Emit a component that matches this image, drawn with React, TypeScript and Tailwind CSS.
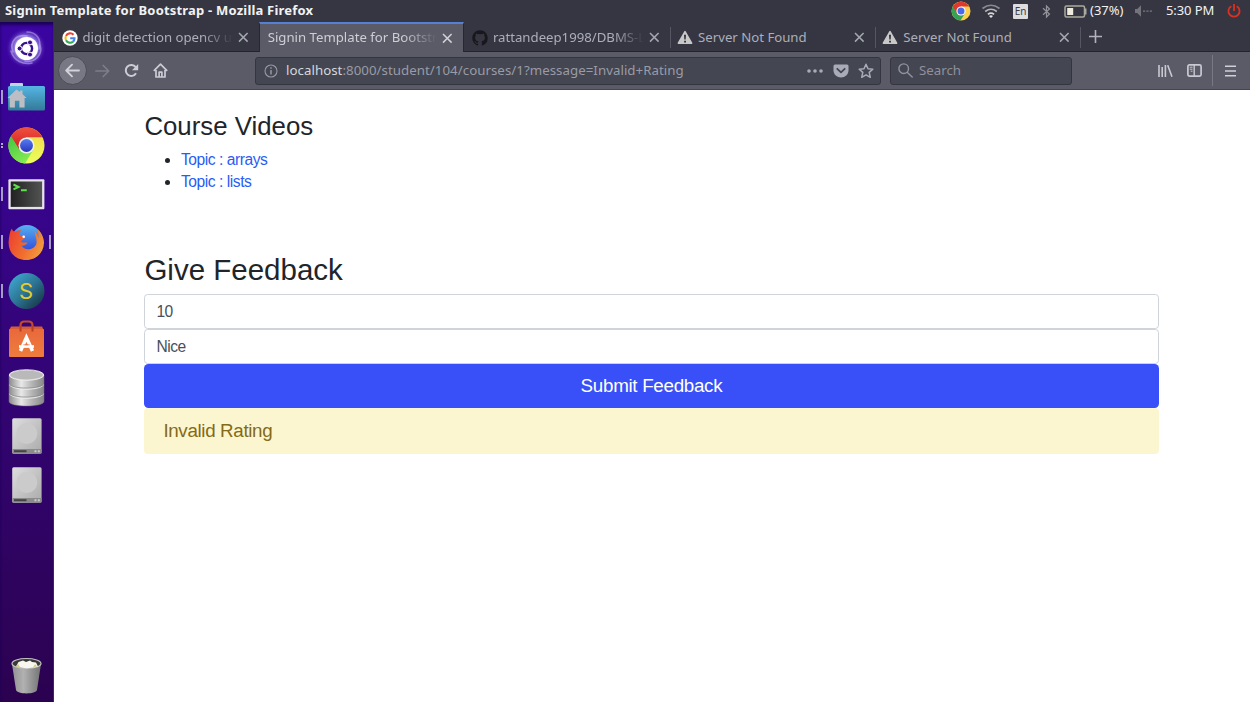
import React from "react";

const CloseIcon = ({ bright }: { bright?: boolean }) => (
  <svg className="h-[11px] w-[11px] shrink-0" viewBox="0 0 11 11" fill="none" stroke={bright ? "#d0d1d8" : "#a5a7b0"} strokeWidth="1.5">
    <path d="M1 1 L9.6 9.6 M9.6 1 L1 9.6" />
  </svg>
);

const GoogleIcon = () => (
  <svg className="h-[16px] w-[16px] shrink-0" viewBox="0 0 16 16">
    <circle cx="8" cy="8" r="7.7" fill="#fff" />
    <g fill="none" strokeWidth="2.1">
      <path d="M11.5 4.8 A4.6 4.6 0 0 0 4 5.9" stroke="#ea4335" />
      <path d="M4 5.9 A4.6 4.6 0 0 0 4 10.3" stroke="#fbbc05" />
      <path d="M4 10.3 A4.6 4.6 0 0 0 11 11.6" stroke="#34a853" />
      <path d="M11 11.6 A4.6 4.6 0 0 0 12.5 8.2 H8.2" stroke="#4285f4" />
    </g>
  </svg>
);

const GithubIcon = () => (
  <svg className="h-[16px] w-[16px] shrink-0" viewBox="0 0 16 16" fill="#17171c">
    <path d="M8 0.3C3.7.3.3 3.8.3 8.1c0 3.4 2.2 6.3 5.3 7.4.4.1.5-.2.5-.4v-1.4c-2.1.5-2.6-1-2.6-1-.4-.9-.9-1.1-.9-1.1-.7-.5.1-.5.1-.5.8.1 1.2.8 1.2.8.7 1.2 1.8.9 2.2.7.1-.5.3-.9.5-1.1-1.7-.2-3.5-.9-3.5-3.9 0-.8.3-1.5.8-2.1-.1-.2-.3-1 .1-2.1 0 0 .6-.2 2.1.8a7 7 0 0 1 3.8 0c1.5-1 2.1-.8 2.1-.8.4 1.1.2 1.9.1 2.1.5.6.8 1.2.8 2.1 0 3-1.8 3.6-3.5 3.8.3.3.5.8.5 1.5v2.1c0 .2.1.5.5.4a7.8 7.8 0 0 0 5.3-7.4C15.7 3.8 12.3.3 8 .3z" />
  </svg>
);

const WarnIcon = () => (
  <svg className="h-[15px] w-[16px] shrink-0" viewBox="0 0 16 15">
    <path d="M8 1.6 L14.6 13.2 H1.4 Z" fill="#c8c8c9" stroke="#c8c8c9" strokeWidth="1.6" strokeLinejoin="round" />
    <path d="M7 4.8h2l-.3 4.8H7.3z M7.1 10.8h1.9v1.8H7.1z" fill="#33343f" />
  </svg>
);

const ChromeSmall = () => (
  <svg className="h-[20px] w-[20px] shrink-0" viewBox="0 0 20 20">
    <circle cx="10" cy="10" r="9.5" fill="#ffd04a" />
    <path d="M10 10 L1.8 5.3 A9.5 9.5 0 0 0 9.5 19.5 L14 12.3Z" fill="#35a352" />
    <path d="M1.8 5.3 A9.5 9.5 0 0 1 18.2 5.5 H10 L5.9 12Z" fill="#dc3a30" />
    <circle cx="10" cy="10" r="4.6" fill="#fff" />
    <circle cx="10" cy="10" r="3.5" fill="#4a68ec" />
  </svg>
);

const ICON = "h-[42px] w-[42px]";

const UbuntuDash = () => (
  <svg className={ICON} viewBox="0 0 42 42">
    <defs>
      <radialGradient id="dash">
        <stop offset="0.5" stopColor="#b5a5f4" />
        <stop offset="0.75" stopColor="#7657d5" stopOpacity="0.6" />
        <stop offset="1" stopColor="#4710ad" stopOpacity="0" />
      </radialGradient>
    </defs>
    <circle cx="21" cy="21" r="20" fill="url(#dash)" />
    <g fill="none" stroke="#d8cef9" strokeLinecap="round" opacity=".45">
      <path d="M8 25C4 14 12 7 22 9" strokeWidth="1.6" />
      <path d="M22 5C31 5 37 12 34 22" strokeWidth="1.6" />
      <path d="M35 18C38 28 30 36 20 34" strokeWidth="1.6" />
      <path d="M6 24C9 34 18 38 27 36" strokeWidth="1.6" />
    </g>
    <circle cx="21.5" cy="21.5" r="11.5" fill="#fff" />
    <circle cx="21.5" cy="21.5" r="5.6" fill="none" stroke="#39108c" strokeWidth="2.4" />
    <g fill="#39108c" stroke="#fff" strokeWidth="1">
      <circle cx="14.6" cy="21.5" r="2.5" />
      <circle cx="25" cy="15.4" r="2.5" />
      <circle cx="25" cy="27.6" r="2.5" />
    </g>
  </svg>
);

const FilesIcon = () => (
  <svg className={ICON} viewBox="0 0 42 42">
    <defs>
      <linearGradient id="folder" x2="0" y2="1">
        <stop stopColor="#56b5e4" />
        <stop offset="1" stopColor="#327a99" />
      </linearGradient>
    </defs>
    <path d="M5 12V8q0-1 1-1h11q1 0 1 1v4z" fill="#c3d3dd" />
    <rect x="3" y="10" width="37" height="24.5" rx="1.5" fill="url(#folder)" />
    <path d="M11.5 13.5 L2.5 22 h2.2 V31.5 h5.2 v-6.8 h4.5 v6.8 h5.2 V22 h2 L17.5 18 v-3.5h-2.4v1.6z" fill="#bdbec3" />
  </svg>
);

const ChromeBig = () => (
  <svg className={ICON} viewBox="0 0 42 42">
    <defs>
      <linearGradient id="cr" x2="0" y2="1"><stop stopColor="#ef5040" /><stop offset="1" stopColor="#d41f22" /></linearGradient>
      <linearGradient id="cb" x2="0" y2="1"><stop stopColor="#557cf5" /><stop offset="1" stopColor="#2a37ba" /></linearGradient>
      <linearGradient id="cg" x2=".6" y2="1"><stop stopColor="#3fc53f" /><stop offset="1" stopColor="#86ea55" /></linearGradient>
      <linearGradient id="cy" x2="0" y2="1"><stop stopColor="#f7d548" /><stop offset="1" stopColor="#e9ff5c" /></linearGradient>
    </defs>
    <circle cx="21.5" cy="21.5" r="18" fill="url(#cy)" />
    <path d="M21.5 21.5 L6 12 A18 18 0 0 0 20 39.4 L28.5 25.5Z" fill="url(#cg)" />
    <path d="M6 12 A18 18 0 0 1 37.4 13.3 H21.5 L14 25Z" fill="url(#cr)" />
    <circle cx="21.5" cy="21.5" r="8" fill="#f0f1f2" />
    <circle cx="21.5" cy="21.5" r="6.5" fill="url(#cb)" />
  </svg>
);

const TerminalIcon = () => (
  <svg className={ICON} viewBox="0 0 42 42">
    <defs>
      <linearGradient id="term" x2="1" y2="0"><stop stopColor="#202120" /><stop offset="1" stopColor="#525353" /></linearGradient>
    </defs>
    <rect x="3.4" y="6.2" width="36" height="30" rx="1" fill="#e6e2eb" />
    <rect x="5.7" y="8.5" width="31.4" height="25.4" fill="url(#term)" />
    <path d="M8.5 11.5 L13.5 14 L8.5 16.3 M16 17.3h5.8" stroke="#5ee04b" strokeWidth="2" fill="none" />
  </svg>
);

const FirefoxBig = () => (
  <svg className={ICON} viewBox="0 0 42 42">
    <defs>
      <linearGradient id="ffx" x1="0" x2="1" y1=".3" y2=".7"><stop stopColor="#ed432f" /><stop offset=".55" stopColor="#f0702f" /><stop offset="1" stopColor="#f0a043" /></linearGradient>
      <linearGradient id="ffb" x2="0" y2="1"><stop stopColor="#57b1f0" /><stop offset="1" stopColor="#2734d9" /></linearGradient>
    </defs>
    <circle cx="22" cy="20" r="16" fill="url(#ffb)" />
    <path d="M6.8 7.5 C7.6 10 8.8 10.9 10.5 10.7 C12 9.5 14 9 16.5 9.2 C14.8 10.5 14.5 12.2 14.8 14 C17 14 20 14.3 20.3 16 C20 17.8 17 18.5 16 20.5 C18 22.5 20.2 20.8 22.5 21.7 C21 24.2 18.5 24.8 16.5 24.6 C19 30 29 29.5 31.3 23 C32.6 18 29.5 14 29.5 9.5 C31 12.1 33 14 33.5 17 C34 15 32.5 11 33 8.5 C36.5 12 39.2 17 39 22 C38.5 32 31 39 21.2 39 C10 39 3.3 31 3.6 21 C4 15.5 4.8 10.5 6.8 7.5Z" fill="url(#ffx)" />
    <circle cx="18.7" cy="15.7" r="1.3" fill="#fff" />
  </svg>
);

const SIcon = () => (
  <div className="flex h-[36px] w-[36px] translate-x-[0.5px] items-center justify-center rounded-full bg-linear-to-br from-[#45b1db] via-[#2c7595] to-[#132b38] font-['Inter',sans-serif] text-[22px] leading-none text-[#e6ca31]">
    S
  </div>
);

const SoftwareIcon = () => (
  <svg className={ICON} viewBox="0 0 42 42">
    <defs>
      <linearGradient id="bag" x2="0" y2="1"><stop stopColor="#e9693c" /><stop offset="1" stopColor="#ee7d3d" /></linearGradient>
    </defs>
    <path d="M15.5 12V7.5q0-4 4-4h4q4 0 4 4V12" fill="none" stroke="#c44b29" strokeWidth="2.2" />
    <path d="M6 8.5h31l2 4H4z" fill="#d55c35" />
    <rect x="4" y="11" width="35" height="28" rx="1" fill="url(#bag)" />
    <path d="M15.5 13.5V8M27.5 13.5V8" stroke="#b64020" strokeWidth="2" />
    <g fill="none" stroke="#fff" strokeWidth="3.5">
      <path d="M15.5 33 L21.4 19.5 L27.5 33" />
      <path d="M14 28.5h15" strokeWidth="2.7" />
    </g>
    <path d="M18.3 26.8h6.4" stroke="#ec7841" strokeWidth=".8" />
  </svg>
);

const DatabaseIcon = () => (
  <svg className={ICON} viewBox="0 0 42 42">
    <defs>
      <linearGradient id="db" x2="1" y2="0"><stop stopColor="#8b8b8b" /><stop offset=".35" stopColor="#e8e8e8" /><stop offset=".65" stopColor="#b5b5b5" /><stop offset="1" stopColor="#888" /></linearGradient>
    </defs>
    {[26, 17, 8].map((y) => (
      <g key={y} transform={`translate(0 ${y})`}>
        <path d="M4 0v8.5c0 6 35 6 35 0V0z" fill="url(#db)" stroke="#6f6f6f" strokeWidth=".5" />
        <ellipse cx="21.5" cy="0" rx="17.3" ry="5.3" fill="#cfcfcf" stroke="#f4f4f4" strokeWidth=".8" />
      </g>
    ))}
    <ellipse cx="21.5" cy="8" rx="16" ry="4.3" fill="#b9b9b9" />
  </svg>
);

const DiskIcon = () => (
  <svg className={ICON} viewBox="0 0 42 42">
    <defs>
      <linearGradient id="disk" x2="1" y2="1"><stop stopColor="#dedede" /><stop offset="1" stopColor="#aaaaaa" /></linearGradient>
    </defs>
    <rect x="7.2" y="3.3" width="29.4" height="35.5" rx="1.5" fill="url(#disk)" />
    <circle cx="21.8" cy="18.5" r="10.5" fill="#cbcbcb" />
    <rect x="7.5" y="34" width="29" height="4.2" fill="#8b8b8b" />
    <path d="M9 36.2h12.5" stroke="#444" strokeWidth="2" />
    <path d="M29.5 36.2h2m1.3 0h2" stroke="#ccc" strokeWidth="2" />
  </svg>
);

const TrashIcon = () => (
  <svg className={ICON} viewBox="0 0 42 42">
    <defs>
      <linearGradient id="bin" x2="1" y2="0"><stop stopColor="#929292" /><stop offset=".4" stopColor="#b1b1b1" /><stop offset="1" stopColor="#737373" /></linearGradient>
    </defs>
    <path d="M7 9 L11 35 C12 39.5 31 39.5 32 35 L36 9Z" fill="url(#bin)" />
    <ellipse cx="21.5" cy="8.5" rx="14.5" ry="5" fill="#393937" stroke="#c4c4c3" strokeWidth="1.2" />
    <path d="M11 11.5 L13.5 7 L18 5.5 L21 7 L25 5.5 L27 7 L31 7.5 L33 11.5 Q22 15 11 11.5" fill="#f7f6ef" />
    <path d="M11 11.3l2-2.5 2 3.5m17-1-2-2-2 3" fill="#d7c87a" />
  </svg>
);

const launchers: { icon: React.ReactNode; marks?: "bar" | "dots" | "both" }[] = [
  { icon: <UbuntuDash /> },
  { icon: <FilesIcon />, marks: "bar" },
  { icon: <ChromeBig />, marks: "dots" },
  { icon: <TerminalIcon />, marks: "bar" },
  { icon: <FirefoxBig />, marks: "both" },
  { icon: <SIcon />, marks: "bar" },
  { icon: <SoftwareIcon /> },
  { icon: <DatabaseIcon /> },
  { icon: <DiskIcon /> },
  { icon: <DiskIcon /> },
];

const Sidebar = () => (
  <aside className="flex w-[54px] shrink-0 flex-col bg-linear-to-b from-[#3b04a1] to-[#2b0250] pt-[2px] shadow-[inset_-1px_0_0_#4a168f,inset_0_3px_3px_#1c0059]">
    {launchers.map(({ icon, marks }, i) => (
      <div key={i} className="flex h-[48.5px] shrink-0 items-center">
        <div className="flex w-[4px] flex-col items-end gap-[1px] pr-[1px]">
          {marks === "dots" ? (
            <>
              <span className="h-[2px] w-[2px] bg-[#b3a5cc]" />
              <span className="h-[2px] w-[2px] bg-[#b3a5cc]" />
            </>
          ) : marks ? (
            <span className="h-[14px] w-[2px] bg-[#a99bc7]" />
          ) : null}
        </div>
        <div className="flex w-[43px] justify-center">{icon}</div>
        <div className="w-[4px] pl-[2px]">{marks === "both" && <div className="h-[14px] w-[2px] bg-[#a99bc7]" />}</div>
      </div>
    ))}
    <div className="mt-auto mb-[4px] flex h-[44px] w-[52px] items-center justify-center">
      <TrashIcon />
    </div>
  </aside>
);

const UI = "font-['Noto_Sans',sans-serif]";

const TopPanel = () => (
  <header className={`${UI} flex h-[22px] shrink-0 items-center bg-[#353641] pr-[9px] pl-[5px] whitespace-nowrap text-[#f2f2f3]`}>
    <span className="text-[13px] font-bold tracking-[0.2px]">Signin Template for Bootstrap - Mozilla Firefox</span>
    <div className="ml-auto flex items-center">
      <ChromeSmall />
      <svg className="ml-[10px] h-[16px] w-[20px]" viewBox="0 0 20 16" fill="none" strokeWidth="1.7">
        <path d="M1.5 5.5 Q10-1 18.5 5.5" stroke="#898a91" />
        <path d="M4.2 8.5 Q10 4 15.8 8.5" stroke="#b3b4b8" />
        <path d="M6.9 11.3 Q10 8.8 13.1 11.3" stroke="#d7d7d8" />
        <path d="M8 13 Q10 11.5 12 13 L10 15Z" fill="#e4e4e4" />
      </svg>
      <span className="ml-[12px] flex h-[15px] w-[15px] items-center justify-center rounded-[1px] bg-[#dddde0] text-[10px] leading-none text-[#3b3c45]">En</span>
      <svg className="ml-[14px] h-[15px] w-[9px]" viewBox="0 0 9 15" fill="none" stroke="#93949a" strokeWidth="1.2">
        <path d="M1 4.2 L7.5 10 L4.5 13 V2 L7.5 5 L1 10.8" />
      </svg>
      <svg className="ml-[13px] h-[13px] w-[23px]" viewBox="0 0 23 13">
        <rect x="1" y="1" width="19.5" height="11" rx="1.5" fill="none" stroke="#aaa99f" strokeWidth="1.5" />
        <rect x="3.2" y="3" width="6" height="7" fill="#eeeade" />
        <path d="M21.7 3.5v6" stroke="#aaa99f" strokeWidth="1.6" />
      </svg>
      <span className="ml-[3px] w-[35px] text-[13px]">(37%)</span>
      <svg className="ml-[10px] h-[14px] w-[18px]" viewBox="0 0 18 14">
        <path d="M0 5h2.2L6 1.3v11.4L2.2 9H0z" fill="#73747b" />
        <path d="M8 7.2h2.2m1.2 0h2.2m1.2 0H17" stroke="#777880" strokeWidth="1.2" />
      </svg>
      <span className="ml-[13px] w-[49px] text-[13px] tracking-[-0.1px]">5:30 PM</span>
      <svg className="ml-[12px] h-[14px] w-[14px]" viewBox="0 0 14 14" fill="none" stroke="#dc3022" strokeWidth="1.8">
        <path d="M4.3 2.2 A5.6 5.6 0 1 0 9.7 2.2 M7 0V7" />
      </svg>
    </div>
  </header>
);

const Tab = ({ icon, title, active, fade }: { icon?: React.ReactNode; title: string; active?: boolean; fade?: boolean }) => (
  <div
    className={`flex w-[205.2px] shrink-0 items-center pr-[10px] pl-[7.5px] ${
      active ? "border-x border-t-2 border-x-[#262731] border-t-[#5680d4] bg-[#5a5b66] text-[#cdced6]" : "border-t-2 border-b border-t-transparent border-b-[#22232d] text-[#acaeb9]"
    }`}
  >
    {icon}
    <span
      className={`-mt-[2px] min-w-0 flex-1 text-[13.2px] leading-[20px] whitespace-nowrap ${icon ? "ml-[5px]" : ""} ${
        fade ? "[mask-image:linear-gradient(to_right,black_80%,transparent_100%)]" : ""
      }`}
    >
      {title}
    </span>
    <span className="ml-[5px] flex"><CloseIcon bright={active} /></span>
  </div>
);

const Divider = () => <span className="-mr-px mt-[5px] h-[21px] w-px shrink-0 bg-[#555661]" />;

const TabStrip = () => (
  <div className={`${UI} flex h-[30px] shrink-0 bg-[#353641]`}>
    <Tab icon={<GoogleIcon />} title="digit detection opencv u" fade />
    <Tab title="Signin Template for Bootstr" active fade />
    <Tab icon={<GithubIcon />} title="rattandeep1998/DBMS-L" fade />
    <Divider />
    <Tab icon={<WarnIcon />} title="Server Not Found" />
    <Divider />
    <Tab icon={<WarnIcon />} title="Server Not Found" />
    <Divider />
    <div className="flex flex-1 items-center border-b border-[#22232d] pl-[9px]">
      <svg className="h-[13px] w-[13px]" viewBox="0 0 13 13" stroke="#b1b3bc" strokeWidth="1.6">
        <path d="M0 6.5h13M6.5 0v13" />
      </svg>
    </div>
  </div>
);

const Toolbar = () => (
  <div className={`${UI} flex h-[38px] shrink-0 items-center border-b border-[#44454f] bg-[#5a5b66] pr-[13px] pl-[3.5px] text-[13.3px]`}>
    <div className="flex h-[29px] w-[29px] items-center justify-center rounded-full border border-[#4b4c56] bg-[#777883]">
      <svg className="h-[15px] w-[15px]" viewBox="0 0 15 15" fill="none" stroke="#d1d3db" strokeWidth="1.8" strokeLinecap="round" strokeLinejoin="round">
        <path d="M14 7.5H1.2M7 1.7 L1.2 7.5 L7 13.3" />
      </svg>
    </div>
    <svg className="ml-[8.5px] h-[14px] w-[15px]" viewBox="0 0 15 14" fill="none" stroke="#7d7e89" strokeWidth="1.7" strokeLinecap="round" strokeLinejoin="round">
      <path d="M1 7h12.5M8.2 1.5 L13.7 7 L8.2 12.5" />
    </svg>
    <svg className="ml-[14px] h-[15px] w-[15px]" viewBox="0 0 15 15">
      <path d="M12 10.3 A5.5 5.5 0 1 1 11.7 4.2" fill="none" stroke="#cbccd5" strokeWidth="2" />
      <path d="M14.2 1v6.2H8z" fill="#cbccd5" />
    </svg>
    <svg className="ml-[14px] h-[15px] w-[15px]" viewBox="0 0 15 15" fill="none" stroke="#cbccd5" strokeWidth="1.7" strokeLinejoin="round">
      <path d="M.8 7.8 L7.5 1.2 L14.2 7.8 M3 7v7h9V7" />
      <path d="M6.1 14V9.2h2.8V14" />
    </svg>
    <div className="ml-[87px] flex h-[28px] w-[626px] items-center rounded-[3px] border border-[#343540] bg-[#444651] pr-[6px] pl-[8px]">
      <svg className="h-[14px] w-[14px]" viewBox="0 0 14 14" fill="none" stroke="#9799a4">
        <circle cx="7" cy="7" r="6" strokeWidth="1.1" />
        <path d="M7 6v4.5M7 3.3v1.5" strokeWidth="1.5" />
      </svg>
      <span className="ml-[8px] tracking-[0.03px] text-[#999ba6]">
        <span className="text-[#d6d7de]">localhost</span>:8000/student/104/courses/1?message=Invalid+Rating
      </span>
      <svg className="ml-auto h-[4px] w-[16px]" viewBox="0 0 16 4" fill="#a9acb8">
        <circle cx="2" cy="2" r="1.8" />
        <circle cx="8" cy="2" r="1.8" />
        <circle cx="14" cy="2" r="1.8" />
      </svg>
      <svg className="ml-[10px] h-[14px] w-[16px]" viewBox="0 0 16 14">
        <path d="M2 .5h12q1.5 0 1.5 1.5v4.3C15.5 10.5 12 13.5 8 13.5S.5 10.5.5 6.3V2Q.5.5 2 .5z" fill="#a9acb8" />
        <path d="M4.3 4.8 L8 8.3 L11.7 4.8" fill="none" stroke="#444651" strokeWidth="1.8" strokeLinecap="round" strokeLinejoin="round" />
      </svg>
      <svg className="ml-[9px] h-[16px] w-[16px]" viewBox="0 0 16 16" fill="none" stroke="#a9acb8" strokeWidth="1.5" strokeLinejoin="round">
        <path d="M8 1.3l2 4.4 4.8.5-3.6 3.2 1.1 4.9L8 11.8l-4.3 2.5 1.1-4.9L1.2 6.2 6 5.7z" />
      </svg>
    </div>
    <div className="ml-[8.5px] flex h-[28px] w-[182.5px] items-center rounded-[3px] border border-[#343540] bg-[#444651] pl-[7.5px] text-[#8f919c]">
      <svg className="h-[15px] w-[15px]" viewBox="0 0 15 15" fill="none" stroke="#9193a0" strokeWidth="1.4" strokeLinecap="round">
        <circle cx="5.7" cy="5.7" r="4.8" />
        <path d="M9.4 9.4 L14.2 14" />
      </svg>
      <span className="ml-[6px]">Search</span>
    </div>
    <svg className="ml-auto h-[14px] w-[15px]" viewBox="0 0 15 14" fill="none" stroke="#c8c9d2" strokeWidth="1.6">
      <path d="M1 1v12M4.2 3v10M7.4 1v12M9.7 1.3l4.3 11.4" />
    </svg>
    <svg className="ml-[14px] h-[13px] w-[15px]" viewBox="0 0 15 13" fill="none" stroke="#c8c9d2">
      <rect x=".9" y=".9" width="13.2" height="11.2" rx="1.5" strokeWidth="1.7" />
      <path d="M7.2 1v11" strokeWidth="1.4" />
      <path d="M2.7 3.2h2.8M2.7 5.2h2.8M3.7 7.2h1.8" strokeWidth="1" />
    </svg>
    <span className="ml-[10px] h-[31px] w-px bg-[#777883]" />
    <svg className="ml-[11px] h-[12px] w-[13px]" viewBox="0 0 13 12" stroke="#cfd0d9" strokeWidth="1.6">
      <path d="M1 1.3h11M1 6h11M1 10.7h11" />
    </svg>
  </div>
);

const inputClass =
  "block h-[34.8px] w-full rounded-[3.7px] border border-[#ced4da] bg-white px-[11px] pt-[1px] text-[15.6px] leading-[22px] tracking-[-0.45px] text-[#495057] outline-none";

const Page = () => (
  <main className="flex-1 bg-white pr-[91.5px] pl-[90.4px] font-['Liberation_Sans',sans-serif] text-[15.6px] leading-[22px] tracking-[-0.45px] text-[#212529]">
    <h2 className="pt-[21px] text-[25.8px] leading-[31px] tracking-normal">Course Videos</h2>
    <ul className="mt-[7px] list-disc pl-[36.6px]">
      <li><a href="#arrays" className="text-[#295cf5]">Topic : arrays</a></li>
      <li><a href="#lists" className="text-[#295cf5]">Topic : lists</a></li>
    </ul>
    <h1 className="mt-[59px] text-[29.5px] leading-[35px] tracking-normal">Give Feedback</h1>
    <form className="mt-[7px]" onSubmit={(e) => e.preventDefault()}>
      <input className={inputClass} defaultValue="10" aria-label="Rating" />
      <input className={inputClass} defaultValue="Nice" aria-label="Feedback" />
      <button className="block h-[44px] w-full rounded-[4.5px] bg-[#394ff7] text-[18.8px] tracking-[-0.3px] text-white">Submit Feedback</button>
    </form>
    <div className="flex h-[46px] items-center rounded-[4px] bg-[#fcf6d0] px-[19px] text-[18.8px] tracking-[-0.35px] text-[#856a17]">Invalid Rating</div>
  </main>
);

export default function App() {
  return (
    <div className="flex h-[702px] w-[1250px] flex-col overflow-hidden bg-white">
      <TopPanel />
      <div className="flex min-h-0 flex-1">
        <Sidebar />
        <div className="flex min-w-0 flex-1 flex-col">
          <TabStrip />
          <Toolbar />
          <Page />
        </div>
      </div>
    </div>
  );
}
